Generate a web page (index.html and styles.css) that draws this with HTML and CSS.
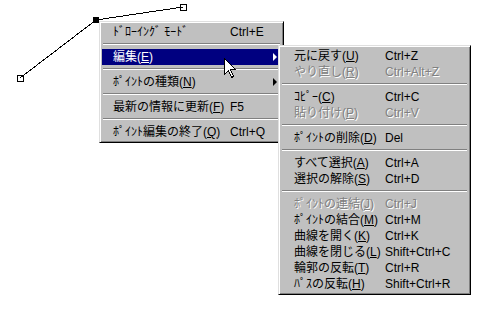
FILE: index.html
```html
<!DOCTYPE html>
<html lang="ja">
<head>
    <meta charset="UTF-8">
    <title>ポイント編集メニュー</title>
    <link rel="stylesheet" href="styles.css">
</head>
<body>
    <div class="canvas">

        <!-- path being edited -->
        <svg class="path-layer" width="492" height="315" viewBox="0 0 492 315">
            <line x1="96" y1="20" x2="183" y2="7" />
            <line x1="96" y1="20" x2="20" y2="78" />
            <rect class="node" x="180.5" y="4.5" width="6" height="6" />
            <rect class="node" x="17.5" y="75.5" width="6" height="6" />
            <rect class="node-selected" x="93" y="17" width="6" height="6" />
        </svg>

        <!-- main popup menu -->
        <div class="menu main-menu">
            <div class="item"><span class="label">ﾄﾞﾛｰｲﾝｸﾞ ﾓｰﾄﾞ</span><span class="key">Ctrl+E</span></div>
            <div class="sep"></div>
            <div class="item active has-sub"><span class="label">編集(<u>E</u>)</span><span class="key"></span></div>
            <div class="sep"></div>
            <div class="item has-sub"><span class="label">ﾎﾟｲﾝﾄの種類(<u>N</u>)</span><span class="key"></span></div>
            <div class="sep"></div>
            <div class="item"><span class="label">最新の情報に更新(<u>F</u>)</span><span class="key">F5</span></div>
            <div class="sep"></div>
            <div class="item"><span class="label">ﾎﾟｲﾝﾄ編集の終了(<u>Q</u>)</span><span class="key">Ctrl+Q</span></div>
        </div>

        <!-- 編集 submenu -->
        <div class="menu sub-menu">
            <div class="item"><span class="label">元に戻す(<u>U</u>)</span><span class="key">Ctrl+Z</span></div>
            <div class="item disabled"><span class="label">やり直し(<u>R</u>)</span><span class="key">Ctrl+Alt+Z</span></div>
            <div class="sep"></div>
            <div class="item"><span class="label">ｺﾋﾟｰ(<u>C</u>)</span><span class="key">Ctrl+C</span></div>
            <div class="item disabled"><span class="label">貼り付け(<u>P</u>)</span><span class="key">Ctrl+V</span></div>
            <div class="sep"></div>
            <div class="item"><span class="label">ﾎﾟｲﾝﾄの削除(<u>D</u>)</span><span class="key">Del</span></div>
            <div class="sep"></div>
            <div class="item"><span class="label">すべて選択(<u>A</u>)</span><span class="key">Ctrl+A</span></div>
            <div class="item"><span class="label">選択の解除(<u>S</u>)</span><span class="key">Ctrl+D</span></div>
            <div class="sep"></div>
            <div class="item disabled"><span class="label">ﾎﾟｲﾝﾄの連結(<u>J</u>)</span><span class="key">Ctrl+J</span></div>
            <div class="item"><span class="label">ﾎﾟｲﾝﾄの結合(<u>M</u>)</span><span class="key">Ctrl+M</span></div>
            <div class="item"><span class="label">曲線を開く(<u>K</u>)</span><span class="key">Ctrl+K</span></div>
            <div class="item"><span class="label">曲線を閉じる(<u>L</u>)</span><span class="key">Shift+Ctrl+C</span></div>
            <div class="item"><span class="label">輪郭の反転(<u>T</u>)</span><span class="key">Ctrl+R</span></div>
            <div class="item"><span class="label">ﾊﾟｽの反転(<u>H</u>)</span><span class="key">Shift+Ctrl+R</span></div>
        </div>

        <!-- mouse pointer -->
        <svg class="cursor" width="13" height="21" viewBox="0 0 13 21">
            <path d="M0.5 0.5 L0.5 16.5 L4.5 12.5 L7.5 19.5 L9.5 18.5 L6.5 11.5 L11.5 11.5 Z" />
        </svg>
    </div>
</body>
</html>
```

FILE: styles.css
```css
body {
    margin: 0;
    padding: 0;
    background: #fff;
    font-family: "Liberation Sans", "Noto Sans CJK JP", sans-serif;
    font-size: 12px;
}

.canvas {
    position: relative;
    width: 492px;
    height: 315px;
    overflow: hidden;
}

.path-layer {
    position: absolute;
    left: 0;
    top: 0;
}

.path-layer line {
    stroke: #000;
    stroke-width: 1;
    shape-rendering: crispEdges;
}

.node {
    fill: none;
    stroke: #000;
    stroke-width: 1;
    shape-rendering: crispEdges;
}

.node-selected {
    fill: #000;
    shape-rendering: crispEdges;
}

/* Win95 style popup menu */
.menu {
    position: absolute;
    background: #c0c0c0;
    border: 1px solid;
    border-color: #dfdfdf #000 #000 #dfdfdf;
    box-shadow: inset 1px 1px #fff, inset -1px -1px #808080;
    padding: 2px;
    box-sizing: border-box;
}

.main-menu {
    left: 99px;
    top: 21px;
    width: 185px;
    height: 122px;
}

.sub-menu {
    left: 278px;
    top: 45px;
    width: 193px;
    height: 250px;
}

.item {
    position: relative;
    display: grid;
    height: 16px;
    line-height: 16px;
    color: #000;
    white-space: nowrap;
}

.main-menu .item {
    grid-template-columns: 117px auto;
    padding-left: 11px;
}

.sub-menu .item {
    grid-template-columns: 91px auto;
    padding-left: 13px;
}

.item u {
    text-decoration: underline;
    text-underline-offset: 1px;
}

.item.active {
    background: #000080;
    color: #fff;
}

.item.disabled {
    color: #808080;
    text-shadow: 1px 1px 0 #fff;
}

.has-sub::after {
    content: "";
    position: absolute;
    right: 4px;
    top: 4px;
    border-left: 4px solid #000;
    border-top: 4px solid transparent;
    border-bottom: 4px solid transparent;
}

.has-sub.active::after {
    border-left-color: #fff;
}

.sep {
    height: 9px;
    margin: 0 1px;
    background:
        linear-gradient(#808080, #808080) 0 3px / 100% 1px no-repeat,
        linear-gradient(#fff, #fff) 0 4px / 100% 1px no-repeat;
}

.cursor {
    position: absolute;
    left: 224px;
    top: 58px;
}

.cursor path {
    fill: #fff;
    stroke: #000;
    stroke-width: 1;
    shape-rendering: crispEdges;
}
```
